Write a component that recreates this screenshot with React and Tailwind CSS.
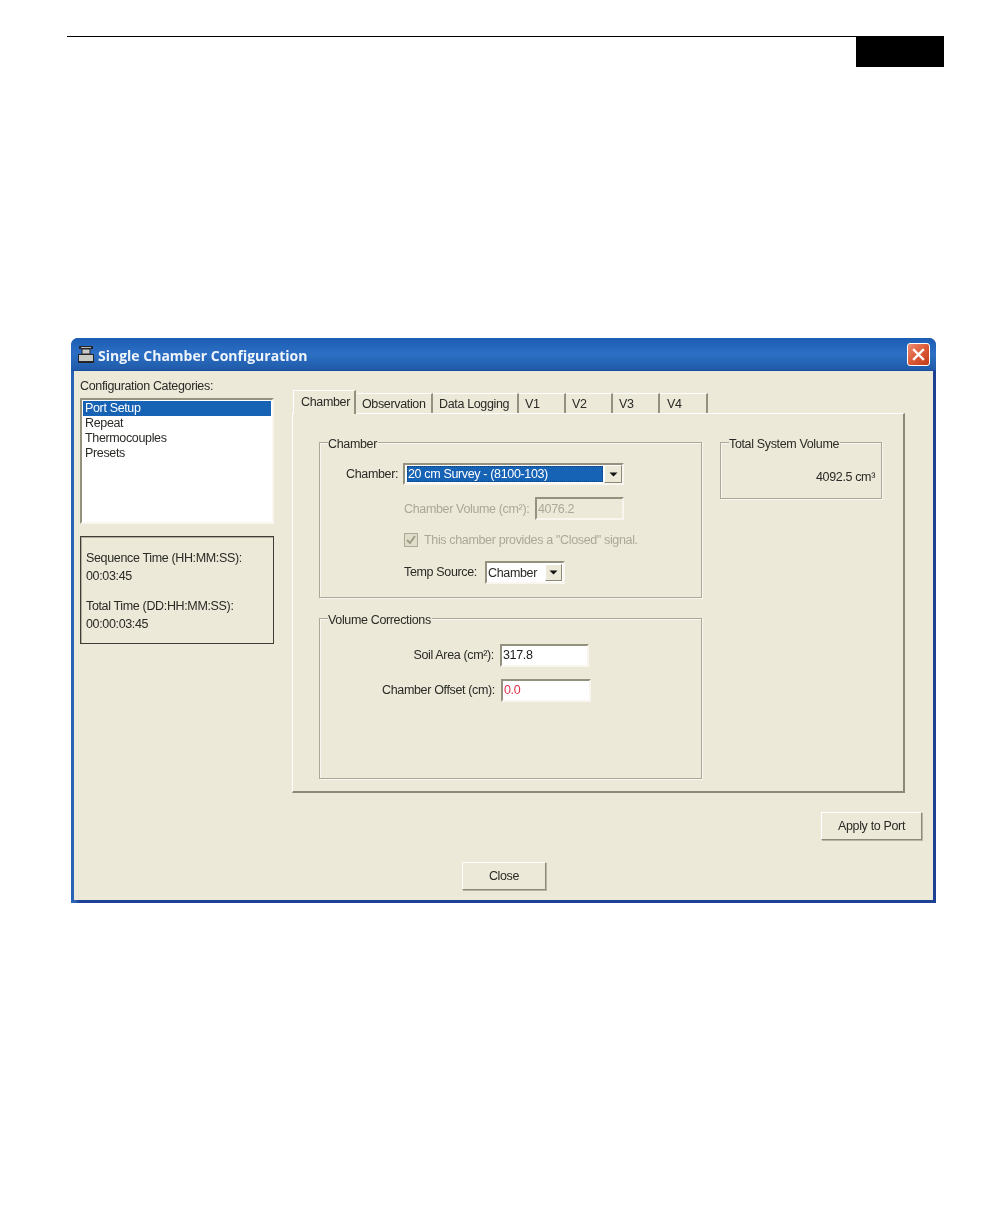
import React from "react";

const sunken = "border-2 border-t-[#94917f] border-l-[#94917f] border-r-[#f8f6ee] border-b-[#f8f6ee]";
const raised = "border border-t-white border-l-white border-r-[#8b8878] border-b-[#8b8878]";

function Tab({ label, className, active }) {
  return (
    <div
      className={
        (active
          ? "h-[24px] pl-[7px] pt-[3px] mr-[1px] border-t border-l border-white border-r-2 border-r-[#94917f] bg-[#ece9d8] "
          : "h-[20px] mt-[3px] pt-[2px] border-t border-white border-r-2 border-r-[#94917f] ") + className
      }
    >
      {label}
    </div>
  );
}

function Group({ title, className, children }) {
  return (
    <div className={"relative border border-[#aca899] shadow-[inset_1px_1px_0_#f8f6ee,1px_1px_0_#f8f6ee] " + className}>
      <div className="absolute -top-[7px] left-[8px] bg-[#ece9d8] pr-px leading-[16px]">{title}</div>
      {children}
    </div>
  );
}

function DropArrow({ className }) {
  return (
    <div className={"flex items-center justify-center bg-[#ece9d8] " + raised + " " + className}>
      <svg width="9" height="5" viewBox="0 0 9 5"><path d="M0.5 0.5h8L4.5 4.5z" fill="#111" /></svg>
    </div>
  );
}

export default function App() {
  return (
    <div className="w-[1008px] h-[1224px] bg-white overflow-hidden text-[12.5px] tracking-[-0.35px] text-[#2a2a26] font-['Liberation_Sans',Arial,sans-serif]">
      <div className="flex items-start ml-[67px] w-[877px] pt-[36px]">
        <div className="flex-1 h-px bg-black"></div>
        <div className="w-[88px] h-[31px] bg-black"></div>
      </div>

      {/* dialog window */}
      <div className="ml-[71px] mt-[271px] w-[865px] h-[565px] flex flex-col rounded-t-[7px] overflow-hidden bg-gradient-to-r from-[#2a62b6] from-[0.5%] to-[#1d3f94] to-[1%] blur-[0.3px]">
        <div className="h-[33px] shrink-0 flex items-center pl-[7px] pr-[6px] border-b border-[#1c4d9c] bg-gradient-to-b from-[#1c5db4] via-[#2c6fc4] to-[#1f5aa8]">
          <svg width="16" height="17" viewBox="0 0 16 17">
            <rect x="1" y="0" width="14" height="3" fill="#26262a" />
            <rect x="3" y="1" width="10" height="1" fill="#b8b8b8" />
            <rect x="4" y="3" width="8" height="5" fill="#c9c9c9" stroke="#26262a" strokeWidth="1" />
            <rect x="0" y="8" width="16" height="9" fill="#26262a" />
            <rect x="1" y="9" width="14" height="6" fill="#c9c9c4" />
          </svg>
          <div className="ml-[4px] pt-[3px] text-[#eef4fb] font-bold text-[14px] tracking-normal font-['Open_Sans',sans-serif]">
            Single Chamber Configuration
          </div>
          <div className="ml-auto w-[23px] h-[23px] rounded-[3px] border border-white flex items-center justify-center bg-gradient-to-br from-[#eb8c70] via-[#db5a36] to-[#c23a18]">
            <svg width="13" height="13" viewBox="0 0 13 13">
              <path d="M2 2l9 9M11 2l-9 9" stroke="white" strokeWidth="2.4" strokeLinecap="square" />
            </svg>
          </div>
        </div>

        <div className="flex-1 relative mx-[3px] mb-[3px] bg-[#ece9d8]">
          <div className="flex items-start">
            {/* left column */}
            <div className="ml-[6px] w-[194px] shrink-0">
              <div className="mt-[7px] h-[20px] leading-[16px]">Configuration Categories:</div>
              <div className={"h-[126px] bg-white pt-px px-[1px] leading-[15px] " + sunken}>
                <div className="bg-[#1662b4] text-white pl-[2px]">Port Setup</div>
                <div className="pl-[2px]">Repeat</div>
                <div className="pl-[2px]">Thermocouples</div>
                <div className="pl-[2px]">Presets</div>
              </div>
              <div className="mt-[12px] h-[108px] border border-[#3f3e36] shadow-[inset_1px_1px_0_#b0ad9b] pl-[5px] pt-[12px] leading-[18px]">
                <div>Sequence Time (HH:MM:SS):</div>
                <div>00:03:45</div>
                <div className="mt-[12px]">Total Time (DD:HH:MM:SS):</div>
                <div>00:00:03:45</div>
              </div>
            </div>

            {/* tabs */}
            <div className="ml-[18px] w-[613px] shrink-0">
              <div className="flex items-start mt-[19px] h-[23px] pl-px leading-[17px]">
                <Tab label="Chamber" className="w-[63px]" active />
                <Tab label="Observation" className="w-[76px] pl-[5px]" />
                <Tab label="Data Logging" className="w-[86px] pl-[6px]" />
                <Tab label="V1" className="w-[47px] pl-[6px]" />
                <Tab label="V2" className="w-[47px] pl-[6px]" />
                <Tab label="V3" className="w-[47px] pl-[6px]" />
                <Tab label="V4" className="w-[48px] pl-[7px]" />
              </div>
              <div className="h-[380px] border-t border-l border-white border-r-2 border-b-2 border-r-[#8b8878] border-b-[#8b8878] flex items-start pl-[26px] pt-[28px]">
                <div className="w-[383px] shrink-0">
                  <Group title="Chamber" className="h-[156px] pl-[84px]">
                    <div className="flex items-center h-[22px] mt-[20px] -ml-[58px]">
                      <div className="w-[51px] text-right whitespace-nowrap">Chamber:</div>
                      <div className={"ml-[6px] w-[221px] h-[22px] bg-white flex items-center " + sunken}>
                        <div className="ml-[2px] w-[196px] h-[16px] leading-[14px] bg-[#1662b4] text-white border border-dotted border-[#0d3f78]">
                          20 cm Survey - (8100-103)
                        </div>
                        <DropArrow className="ml-px w-[18px] h-[18px]" />
                      </div>
                    </div>
                    <div className="flex items-center h-[23px] mt-[12px] text-[#aca899]">
                      <div className="w-[131px] whitespace-nowrap pt-px">Chamber Volume (cm²):</div>
                      <div className={"w-[89px] h-[23px] pl-px leading-[20px] " + sunken}>4076.2</div>
                    </div>
                    <div className="flex items-center h-[14px] mt-[13px] text-[#aca899]">
                      <div className="w-[14px] h-[14px] border border-[#aca899] bg-[#e0ddc8] flex items-center justify-center">
                        <svg width="10" height="10" viewBox="0 0 10 10">
                          <path d="M1 5l3 3 5-7" fill="none" stroke="#a09c88" strokeWidth="2" />
                        </svg>
                      </div>
                      <div className="ml-[6px] whitespace-nowrap">This chamber provides a "Closed" signal.</div>
                    </div>
                    <div className="flex items-center h-[23px] mt-[14px]">
                      <div className="w-[81px] whitespace-nowrap">Temp Source:</div>
                      <div className={"w-[80px] h-[23px] bg-white flex items-center " + sunken}>
                        <div className="pl-px w-[58px] pt-px">Chamber</div>
                        <DropArrow className="w-[17px] h-[17px]" />
                      </div>
                    </div>
                  </Group>
                  <Group title="Volume Corrections" className="mt-[20px] h-[161px]">
                    <div className="flex items-center h-[23px] mt-[25px]">
                      <div className="w-[174px] text-right whitespace-nowrap">Soil Area (cm²):</div>
                      <div className={"ml-[6px] w-[89px] h-[23px] bg-white pl-px leading-[19px] text-[#1c1c1a] " + sunken}>317.8</div>
                    </div>
                    <div className="flex items-center h-[23px] mt-[12px]">
                      <div className="w-[175px] text-right whitespace-nowrap">Chamber Offset (cm):</div>
                      <div className={"ml-[6px] w-[90px] h-[23px] bg-white pl-px leading-[19px] text-[#e0304a] " + sunken}>0.0</div>
                    </div>
                  </Group>
                </div>
                <Group title="Total System Volume" className="ml-[18px] w-[162px] h-[57px]">
                  <div className="mt-[25px] pr-[6px] text-right">4092.5 cm³</div>
                </Group>
              </div>
            </div>
          </div>

          <div className={"ml-[747px] mt-[19px] w-[101px] h-[28px] flex items-center justify-center shadow-[1px_1px_0_#b8b5a3] " + raised}>Apply to Port</div>
          <div className={"ml-[388px] mt-[22px] w-[84px] h-[28px] flex items-center justify-center shadow-[1px_1px_0_#b8b5a3] " + raised}>Close</div>
        </div>
      </div>
    </div>
  );
}
